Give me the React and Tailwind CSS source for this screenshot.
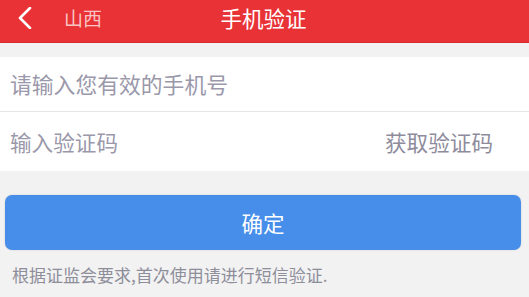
import React from "react";

export default function App() {
  const font = { fontFamily: '"Noto Sans CJK SC", "Noto Sans", sans-serif' };
  return (
    <div className="w-[529px] h-[297px] bg-[#f2f2f2] overflow-hidden" style={font}>
      <div className="relative h-[43px] bg-[#e93236] pb-[8px] flex items-center border-b border-[#d92a2e]">
        <div className="flex items-center pl-[17px]">
          <svg width="17" height="22" viewBox="0 0 17 22" className="mt-[1px]">
            <path d="M13 1 L3 11 L13 21" fill="none" stroke="#ffffff" strokeWidth="2.6" strokeLinecap="round" strokeLinejoin="round" />
          </svg>
          <span className="ml-[30px] text-[19px] leading-none text-[#f8c4c4]">山西</span>
        </div>
        <div className="absolute left-0 right-0 top-0 h-[35px] flex items-center justify-center pointer-events-none">
          <span className="text-[21.5px] leading-none text-white ml-[-2px]">手机验证</span>
        </div>
      </div>
      <div className="mt-[14px] bg-white">
        <div className="h-[55px] flex items-center pl-[10px] border-b border-[#e6e6e6]">
          <span className="text-[21.8px] leading-none text-[#9a98aa]">请输入您有效的手机号</span>
        </div>
        <div className="h-[59px] flex items-center justify-between pl-[10px] pr-[36px]">
          <span className="text-[21.6px] leading-none text-[#9a98aa]">输入验证码</span>
          <span className="text-[21.6px] leading-none text-[#8e8c9c]">获取验证码</span>
        </div>
      </div>
      <div className="mt-[24px] ml-[5px] mr-[8px] h-[55px] rounded-[7px] bg-[#468eea] shadow-[0_0_2px_rgba(0,0,0,0.15)] flex items-center justify-center">
        <span className="text-[21.5px] leading-none text-white">确定</span>
      </div>
      <div className="mt-[16px] pl-[12px] text-[17px] leading-none text-[#8e8e9a]">
        根据证监会要求,首次使用请进行短信验证.
      </div>
    </div>
  );
}
